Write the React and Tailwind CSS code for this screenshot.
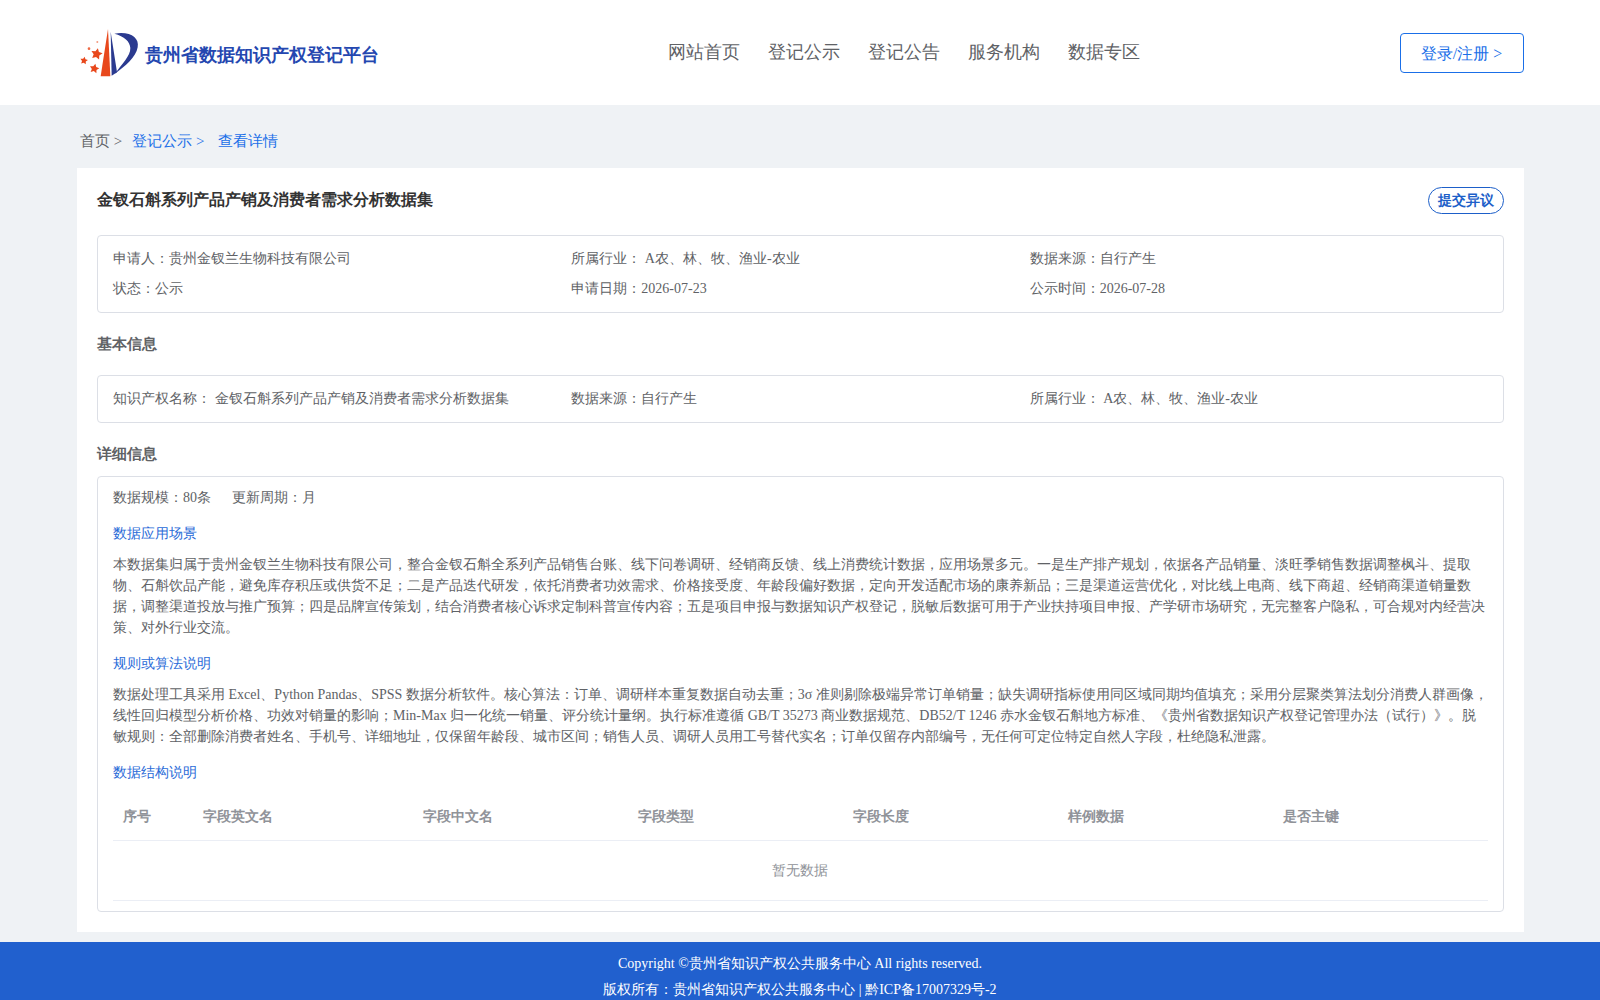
const navItems = ['网站首页', '登记公示', '登记公告', '服务机构', '数据专区'];
const columns = ['序号', '字段英文名', '字段中文名', '字段类型', '字段长度', '样例数据', '是否主键'];

const star = (cx, cy, r, rot = 0) => {
  const pts = [];
  for (let i = 0; i < 10; i++) {
    const rad = i % 2 === 0 ? r : r * 0.5;
    const a = ((-90 + rot + i * 36) * Math.PI) / 180;
    pts.push(`${(cx + rad * Math.cos(a)).toFixed(1)},${(cy + rad * Math.sin(a)).toFixed(1)}`);
  }
  return pts.join(' ');
};

const Logo = () => (
  <svg width="70" height="60" viewBox="0 0 210 180" className="shrink-0">
    <path d="M99 18 L106 160 L77 160 Z" fill="#e8481c" />
    <path d="M107 26 L126 148 L110 158 Z" fill="#2b3a8f" />
    <path d="M118 32 C165 24 194 44 188 73 C183 103 150 130 120 152 C140 124 167 98 166 75 C165 55 148 40 118 32 Z" fill="#2b3a8f" />
    <polygon points={star(65, 93, 18, 12)} fill="#e8481c" />
    <polygon points={star(27, 113, 12, 10)} fill="#e8481c" />
    <polygon points={star(58, 137, 15, 12)} fill="#e8481c" />
    <circle cx="42" cy="77" r="4" fill="#ee6a45" />
    <circle cx="67" cy="57" r="3" fill="#f29a80" />
  </svg>
);

const InfoRow = ({ items }) => (
  <div className="grid grid-cols-3">
    {items.map((item) => (
      <div key={item}>{item}</div>
    ))}
  </div>
);

const SectionLink = ({ children }) => (
  <div className="text-[14px] leading-[21px] text-[#2a6bd8]">{children}</div>
);

const App = () => {
  return (
    <div className="min-h-screen bg-[#eff2f5] font-['Liberation_Serif',serif]">
      <header className="flex h-[105px] items-center justify-between bg-white pl-[75px] pr-[76px]">
        <div className="flex w-[300px] items-center">
          <Logo />
          <span className="whitespace-nowrap pt-[6px] text-[18px] font-bold text-[#2447b0]">贵州省数据知识产权登记平台</span>
        </div>
        <nav className="ml-[32px] flex gap-[28px] text-[18px] text-[#606266]">
          {navItems.map((item) => (
            <a key={item}>{item}</a>
          ))}
        </nav>
        <button className="h-[40px] w-[124px] rounded border border-[#1a6fe8] pr-[1px] pt-[2px] text-[16px] text-[#1a6fe8]">登录/注册 &gt;</button>
      </header>

      <main className="pl-[77px] pr-[76px] pb-[10px]">
        <div className="flex h-[63px] items-center pl-[3px] pt-[10px] text-[15px] text-[#606266]">
          <span>首页 &gt;</span>
          <span className="ml-[10px] text-[#1a6fe8]">登记公示 &gt;</span>
          <span className="ml-[14px] text-[#1a6fe8]">查看详情</span>
        </div>

        <div className="h-[764px] bg-white px-[20px] pt-[19px]">
          <div className="flex items-start justify-between">
            <h1 className="pt-[1px] text-[16px] font-bold leading-[24px] text-[#333333]">金钗石斛系列产品产销及消费者需求分析数据集</h1>
            <button className="h-[27px] w-[76px] rounded-[14px] border border-[#1d5fc9] text-[14px] font-bold text-[#1d5fc9]">提交异议</button>
          </div>

          <div className="mt-[21px] flex h-[78px] flex-col justify-center gap-[9px] rounded border border-[#dcdfe6] px-[15px] pb-[2px] text-[14px] leading-[21px] text-[#606266]">
            <InfoRow items={['申请人：贵州金钗兰生物科技有限公司', '所属行业： A农、林、牧、渔业-农业', '数据来源：自行产生']} />
            <InfoRow items={['状态：公示', '申请日期：2026-07-23', '公示时间：2026-07-28']} />
          </div>

          <h2 className="mt-[21px] text-[15px] font-bold leading-[21px] text-[#606266]">基本信息</h2>

          <div className="mt-[20px] flex h-[48px] items-center rounded border border-[#dcdfe6] px-[15px] pb-[2px] text-[14px] text-[#606266]">
            <div className="w-full">
              <InfoRow items={['知识产权名称： 金钗石斛系列产品产销及消费者需求分析数据集', '数据来源：自行产生', '所属行业： A农、林、牧、渔业-农业']} />
            </div>
          </div>

          <h2 className="mt-[21px] text-[15px] font-bold leading-[21px] text-[#606266]">详细信息</h2>

          <div className="mt-[11px] h-[436px] rounded border border-[#dcdfe6] px-[15px] pt-[10px] text-[14px] leading-[21px] text-[#606266]">
            <div className="flex gap-[21px]">
              <span>数据规模：80条</span>
              <span>更新周期：月</span>
            </div>

            <div className="mt-[15px]">
              <SectionLink>数据应用场景</SectionLink>
            </div>
            <p className="mt-[10px]">
              本数据集归属于贵州金钗兰生物科技有限公司，整合金钗石斛全系列产品销售台账、线下问卷调研、经销商反馈、线上消费统计数据，应用场景多元。一是生产排产规划，依据各产品销量、淡旺季销售数据调整枫斗、提取物、石斛饮品产能，避免库存积压或供货不足；二是产品迭代研发，依托消费者功效需求、价格接受度、年龄段偏好数据，定向开发适配市场的康养新品；三是渠道运营优化，对比线上电商、线下商超、经销商渠道销量数据，调整渠道投放与推广预算；四是品牌宣传策划，结合消费者核心诉求定制科普宣传内容；五是项目申报与数据知识产权登记，脱敏后数据可用于产业扶持项目申报、产学研市场研究，无完整客户隐私，可合规对内经营决策、对外行业交流。
            </p>

            <div className="mt-[15px]">
              <SectionLink>规则或算法说明</SectionLink>
            </div>
            <p className="mt-[10px]">
              数据处理工具采用 Excel、Python Pandas、SPSS 数据分析软件。核心算法：订单、调研样本重复数据自动去重；3σ 准则剔除极端异常订单销量；缺失调研指标使用同区域同期均值填充；采用分层聚类算法划分消费人群画像，线性回归模型分析价格、功效对销量的影响；Min-Max 归一化统一销量、评分统计量纲。执行标准遵循 GB/T 35273 商业数据规范、DB52/T 1246 赤水金钗石斛地方标准、《贵州省数据知识产权登记管理办法（试行）》。脱敏规则：全部删除消费者姓名、手机号、详细地址，仅保留年龄段、城市区间；销售人员、调研人员用工号替代实名；订单仅留存内部编号，无任何可定位特定自然人字段，杜绝隐私泄露。
            </p>

            <div className="mt-[15px]">
              <SectionLink>数据结构说明</SectionLink>
            </div>

            <table className="mt-[10px] w-full table-fixed border-collapse">
              <colgroup>
                <col className="w-[80px]" />
                <col className="w-[220px]" />
              </colgroup>
              <thead>
                <tr className="h-[47px] border-b border-[#ebeef5]">
                  {columns.map((col) => (
                    <th key={col} className="px-[10px] text-left font-bold text-[#909399]">{col}</th>
                  ))}
                </tr>
              </thead>
              <tbody>
                <tr className="h-[60px] border-b border-[#ebeef5]">
                  <td colSpan={7} className="pr-[2px] text-center text-[#909399]">暂无数据</td>
                </tr>
              </tbody>
            </table>
          </div>
        </div>
      </main>

      <footer className="h-[58px] overflow-hidden bg-[#2160ce] pt-[9px] text-center text-[14px] leading-[25px] text-white">
        <div>Copyright ©贵州省知识产权公共服务中心 All rights reserved.</div>
        <div className="mt-[1px]">版权所有：贵州省知识产权公共服务中心 | 黔ICP备17007329号-2</div>
      </footer>
    </div>
  );
};

export default App;
